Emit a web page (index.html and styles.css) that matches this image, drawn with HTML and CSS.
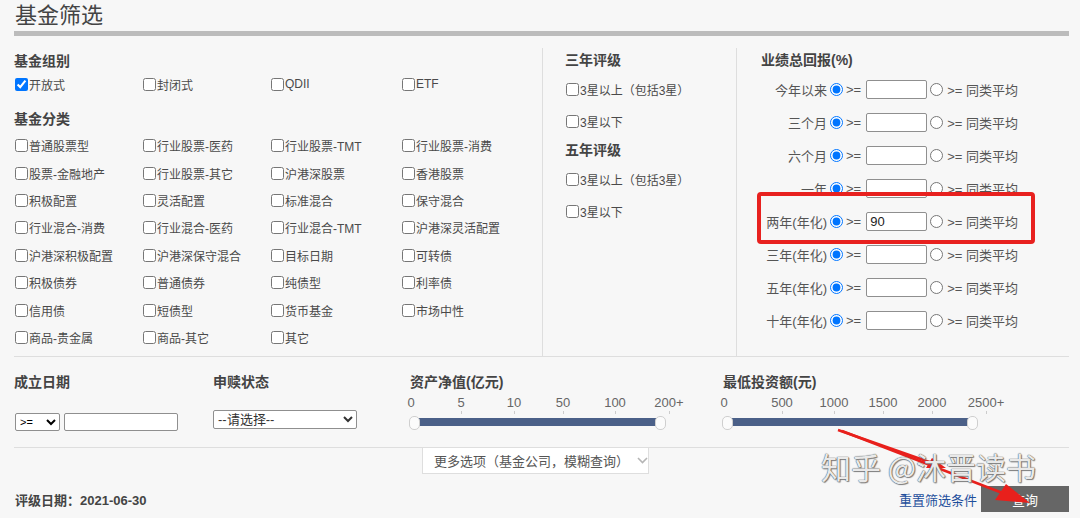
FILE: index.html
```html
<!DOCTYPE html>
<html lang="zh-CN">
<head>
<meta charset="UTF-8">
<meta name="viewport" content="width=device-width, initial-scale=1.0">
<title>基金筛选</title>
<link rel="stylesheet" href="styles.css">
</head>
<body>
<div class="page">
  <h1 class="title">基金筛选</h1>
  <div class="title-bar"></div>

  <div class="filters">
    <div class="col col-type">
      <div class="group-title">基金组别</div>
      <div class="check-grid">
        <label class="check"><input type="checkbox" checked>开放式</label>
        <label class="check"><input type="checkbox">封闭式</label>
        <label class="check"><input type="checkbox">QDII</label>
        <label class="check"><input type="checkbox">ETF</label>
      </div>
      <div class="group-title second">基金分类</div>
      <div class="check-grid dense">
        <label class="check"><input type="checkbox">普通股票型</label>
        <label class="check"><input type="checkbox">行业股票-医药</label>
        <label class="check"><input type="checkbox">行业股票-TMT</label>
        <label class="check"><input type="checkbox">行业股票-消费</label>
        <label class="check"><input type="checkbox">股票-金融地产</label>
        <label class="check"><input type="checkbox">行业股票-其它</label>
        <label class="check"><input type="checkbox">沪港深股票</label>
        <label class="check"><input type="checkbox">香港股票</label>
        <label class="check"><input type="checkbox">积极配置</label>
        <label class="check"><input type="checkbox">灵活配置</label>
        <label class="check"><input type="checkbox">标准混合</label>
        <label class="check"><input type="checkbox">保守混合</label>
        <label class="check"><input type="checkbox">行业混合-消费</label>
        <label class="check"><input type="checkbox">行业混合-医药</label>
        <label class="check"><input type="checkbox">行业混合-TMT</label>
        <label class="check"><input type="checkbox">沪港深灵活配置</label>
        <label class="check"><input type="checkbox">沪港深积极配置</label>
        <label class="check"><input type="checkbox">沪港深保守混合</label>
        <label class="check"><input type="checkbox">目标日期</label>
        <label class="check"><input type="checkbox">可转债</label>
        <label class="check"><input type="checkbox">积极债券</label>
        <label class="check"><input type="checkbox">普通债券</label>
        <label class="check"><input type="checkbox">纯债型</label>
        <label class="check"><input type="checkbox">利率债</label>
        <label class="check"><input type="checkbox">信用债</label>
        <label class="check"><input type="checkbox">短债型</label>
        <label class="check"><input type="checkbox">货币基金</label>
        <label class="check"><input type="checkbox">市场中性</label>
        <label class="check"><input type="checkbox">商品-贵金属</label>
        <label class="check"><input type="checkbox">商品-其它</label>
        <label class="check"><input type="checkbox">其它</label>
      </div>
    </div>

    <div class="col col-rating">
      <div class="group-title">三年评级</div>
      <label class="check rating-row"><input type="checkbox">3星以上（包括3星）</label>
      <label class="check rating-row"><input type="checkbox">3星以下</label>
      <div class="group-title rating-second">五年评级</div>
      <label class="check rating-row"><input type="checkbox">3星以上（包括3星）</label>
      <label class="check rating-row"><input type="checkbox">3星以下</label>
    </div>

    <div class="col col-return">
      <div class="group-title">业绩总回报(%)</div>
      <div class="return-row">
        <span class="period">今年以来</span><input type="radio" name="r1" checked><span class="ge">&gt;=</span><input class="num" type="text"><input type="radio" name="r1"><span class="avg">&gt;= 同类平均</span>
      </div>
      <div class="return-row">
        <span class="period">三个月</span><input type="radio" name="r2" checked><span class="ge">&gt;=</span><input class="num" type="text"><input type="radio" name="r2"><span class="avg">&gt;= 同类平均</span>
      </div>
      <div class="return-row">
        <span class="period">六个月</span><input type="radio" name="r3" checked><span class="ge">&gt;=</span><input class="num" type="text"><input type="radio" name="r3"><span class="avg">&gt;= 同类平均</span>
      </div>
      <div class="return-row">
        <span class="period">一年</span><input type="radio" name="r4" checked><span class="ge">&gt;=</span><input class="num" type="text"><input type="radio" name="r4"><span class="avg">&gt;= 同类平均</span>
      </div>
      <div class="return-row">
        <span class="period">两年(年化)</span><input type="radio" name="r5" checked><span class="ge">&gt;=</span><input class="num" type="text" value="90"><input type="radio" name="r5"><span class="avg">&gt;= 同类平均</span>
      </div>
      <div class="return-row">
        <span class="period">三年(年化)</span><input type="radio" name="r6" checked><span class="ge">&gt;=</span><input class="num" type="text"><input type="radio" name="r6"><span class="avg">&gt;= 同类平均</span>
      </div>
      <div class="return-row">
        <span class="period">五年(年化)</span><input type="radio" name="r7" checked><span class="ge">&gt;=</span><input class="num" type="text"><input type="radio" name="r7"><span class="avg">&gt;= 同类平均</span>
      </div>
      <div class="return-row">
        <span class="period">十年(年化)</span><input type="radio" name="r8" checked><span class="ge">&gt;=</span><input class="num" type="text"><input type="radio" name="r8"><span class="avg">&gt;= 同类平均</span>
      </div>
    </div>
  </div>

  <div class="extras">
    <div class="extra extra-date">
      <div class="group-title">成立日期</div>
      <div class="date-controls">
        <select class="op"><option>&gt;=</option><option>&lt;=</option></select><input class="date-input" type="text">
      </div>
    </div>
    <div class="extra extra-status">
      <div class="group-title">申赎状态</div>
      <select class="status"><option>--请选择--</option></select>
    </div>
    <div class="extra extra-asset">
      <div class="group-title">资产净值(亿元)</div>
      <div class="slider">
        <div class="scale">
          <span style="left:1px">0</span>
          <span style="left:51px">5</span>
          <span style="left:104px">10</span>
          <span style="left:153px">50</span>
          <span style="left:205px">100</span>
          <span style="left:259px">200+</span>
        </div>
        <div class="ticks">
          <i style="left:51px"></i><i style="left:104px"></i><i style="left:153px"></i><i style="left:205px"></i><i style="left:259px"></i>
        </div>
        <div class="track" style="width:240px"><b class="handle start"></b><b class="handle end"></b></div>
      </div>
    </div>
    <div class="extra extra-invest">
      <div class="group-title">最低投资额(元)</div>
      <div class="slider">
        <div class="scale">
          <span style="left:1px">0</span>
          <span style="left:59px">500</span>
          <span style="left:111px">1000</span>
          <span style="left:160px">1500</span>
          <span style="left:209px">2000</span>
          <span style="left:263px">2500+</span>
        </div>
        <div class="ticks">
          <i style="left:59px"></i><i style="left:111px"></i><i style="left:160px"></i><i style="left:209px"></i><i style="left:263px"></i>
        </div>
        <div class="track" style="width:239px"><b class="handle start"></b><b class="handle end"></b></div>
      </div>
    </div>
  </div>

  <div class="more">
    <div class="more-tab">更多选项（基金公司，模糊查询）<svg class="chev" width="11" height="7" viewBox="0 0 11 7"><polyline points="1,1 5.5,5.5 10,1" fill="none" stroke="#b5b5b5" stroke-width="1.6"/></svg></div>
  </div>

  <div class="footer">
    <div class="rate-date">评级日期：2021-06-30</div>
    <div class="actions">
      <a class="reset" href="#">重置筛选条件</a>
      <button class="search" type="button">查询</button>
    </div>
  </div>
</div>

<div class="highlight"></div>
<svg class="arrows" width="1080" height="518" viewBox="0 0 1080 518">
  <line x1="838" y1="430" x2="935" y2="464" stroke="#e8201c" stroke-width="2.5"/>
  <polygon points="946,468 926,468 932,458" fill="#e8201c"/>
  <line x1="842" y1="431" x2="1005" y2="494" stroke="#e8201c" stroke-width="2.5"/>
  <polygon points="1030,503 995,500 1006,484" fill="#e8201c"/>
</svg>
<div class="watermark">知乎 @沐晋读书</div>
</body>
</html>
```

FILE: styles.css
```css
body {
  margin: 0;
  background: #f7f7f7;
  font-family: "Liberation Sans", "Noto Sans CJK SC", sans-serif;
  font-size: 12px;
  color: #444;
}

.page {
  margin: 0 11px 0 14px;
}

.title {
  margin: 0;
  padding-left: 1px;
  height: 31px;
  line-height: 31px;
  font-size: 22px;
  font-weight: normal;
  color: #444;
}

.title-bar {
  height: 5px;
  background: #bcbcbc;
}

/* top filters */
.filters {
  display: flex;
  height: 321px;
  box-sizing: border-box;
  padding-top: 12px;
  border-bottom: 1px solid #dedede;
}

.col {
  box-sizing: border-box;
}

.col-type {
  width: 529px;
  border-right: 1px solid #dedede;
}

.col-rating {
  width: 194px;
  padding-left: 22px;
  border-right: 1px solid #dedede;
}

.col-return {
  flex: 1;
  padding-left: 24px;
}

.group-title {
  font-size: 14px;
  font-weight: bold;
  color: #444;
  line-height: 26px;
}

.group-title.second {
  margin-top: 12px;
}

.check-grid {
  display: grid;
  grid-template-columns: 128px 128px 131px 1fr;
  grid-auto-rows: 20px;
}

.check-grid.dense {
  grid-auto-rows: 27.4px;
}

.check {
  display: flex;
  align-items: center;
  white-space: nowrap;
  color: #4a4a4a;
}

.check input {
  width: 13px;
  height: 13px;
  margin: 0 1px 0 1px;
}

.col-rating .group-title {
  line-height: 25px;
}

.rating-row {
  height: 32px;
}

.col-rating .rating-second {
  line-height: 26px;
}

/* total return */
.col-return .group-title {
  line-height: 25px;
}

.return-row {
  display: flex;
  align-items: center;
  height: 33px;
  font-size: 13px;
  color: #555;
}

.period {
  width: 66px;
  text-align: right;
  white-space: nowrap;
}

.return-row input[type="radio"] {
  width: 13px;
  height: 13px;
  margin: 0 0 0 3px;
}

.ge {
  margin-left: 3px;
}

.num {
  margin-left: 5px;
  width: 61px;
  height: 19px;
  box-sizing: border-box;
  border: 1px solid #8f8f8f;
  border-radius: 2px;
  padding: 0 3px;
  font-family: "Liberation Sans", sans-serif;
  font-size: 13px;
  color: #222;
  background: #fff;
}

.avg {
  margin-left: 4px;
  white-space: nowrap;
}

/* second row of filters */
.extras {
  display: flex;
  height: 91px;
  box-sizing: border-box;
  padding-top: 12px;
  border-bottom: 1px solid #dedede;
}

.extra-date {
  width: 199px;
}

.extra-status {
  width: 197px;
}

.extra-asset {
  width: 313px;
}

.extra-invest {
  flex: 1;
}

.date-controls {
  display: flex;
  margin-top: 18px;
  padding-left: 1px;
}

.op {
  width: 45px;
  height: 18px;
  font-size: 11px;
  padding: 0;
  border: 1px solid #8f8f8f;
  border-radius: 2px;
  background: #fff;
}

.date-input {
  margin-left: 4px;
  width: 114px;
  height: 18px;
  box-sizing: border-box;
  border: 1px solid #8f8f8f;
  border-radius: 2px;
  background: #fff;
}

.status {
  margin-top: 15px;
  width: 144px;
  height: 19px;
  font-size: 13px;
  padding: 0;
  border: 1px solid #8f8f8f;
  border-radius: 2px;
  background: #fff;
  color: #333;
}

.slider {
  width: 300px;
}

.scale,
.ticks {
  position: relative;
}

.scale {
  height: 15px;
}

.scale span {
  position: absolute;
  top: 0;
  transform: translateX(-50%);
  font-size: 13px;
  line-height: 15px;
  color: #666;
}

.ticks {
  height: 8px;
}

.ticks i {
  position: absolute;
  top: 1px;
  width: 1px;
  height: 3px;
  background: #ccc;
}

.track {
  position: relative;
  margin-left: 7px;
  height: 8px;
  background: #4b6088;
}

.handle {
  position: absolute;
  top: -2px;
  width: 9px;
  height: 12px;
  border: 1px solid #cfcfcf;
  border-radius: 5px;
  background: #fbfbfb;
}

.handle.start {
  left: -8px;
}

.handle.end {
  right: -9px;
}

/* more options tab */
.more {
  padding-left: 408px;
}

.more-tab {
  display: flex;
  align-items: center;
  width: 227px;
  height: 26px;
  box-sizing: border-box;
  padding-left: 11px;
  border: 1px solid #dedede;
  border-top: none;
  background: #fff;
  font-size: 13px;
  color: #555;
}

.chev {
  margin-left: 8px;
}

/* footer */
.footer {
  display: flex;
  justify-content: space-between;
  align-items: center;
  margin-top: 12px;
  height: 26px;
}

.rate-date {
  padding-left: 1px;
  font-size: 13px;
  font-weight: bold;
  color: #444;
}

.actions {
  display: flex;
  align-items: center;
}

.reset {
  font-size: 13px;
  color: #1f4f9c;
  text-decoration: none;
  margin-right: 4px;
}

.search {
  width: 88px;
  height: 26px;
  border: none;
  background: #666;
  color: #fff;
  font-family: "Liberation Sans", "Noto Sans CJK SC", sans-serif;
  font-size: 13px;
  padding: 0;
}

/* annotation overlays */
.highlight {
  position: absolute;
  left: 757px;
  top: 192px;
  width: 278px;
  height: 52px;
  box-sizing: border-box;
  border: 4px solid #e8211f;
  border-radius: 4px;
}

.arrows {
  position: absolute;
  left: 0;
  top: 0;
  pointer-events: none;
}

.watermark {
  position: absolute;
  left: 821px;
  top: 447px;
  font-family: "Noto Sans CJK SC", sans-serif;
  font-size: 30px;
  line-height: 38px;
  color: rgba(255, 255, 255, 0.9);
  text-shadow: 0 0 1px #555, 0 0 1px #555, 1px 1px 1px #888;
  white-space: nowrap;
  pointer-events: none;
}
```
